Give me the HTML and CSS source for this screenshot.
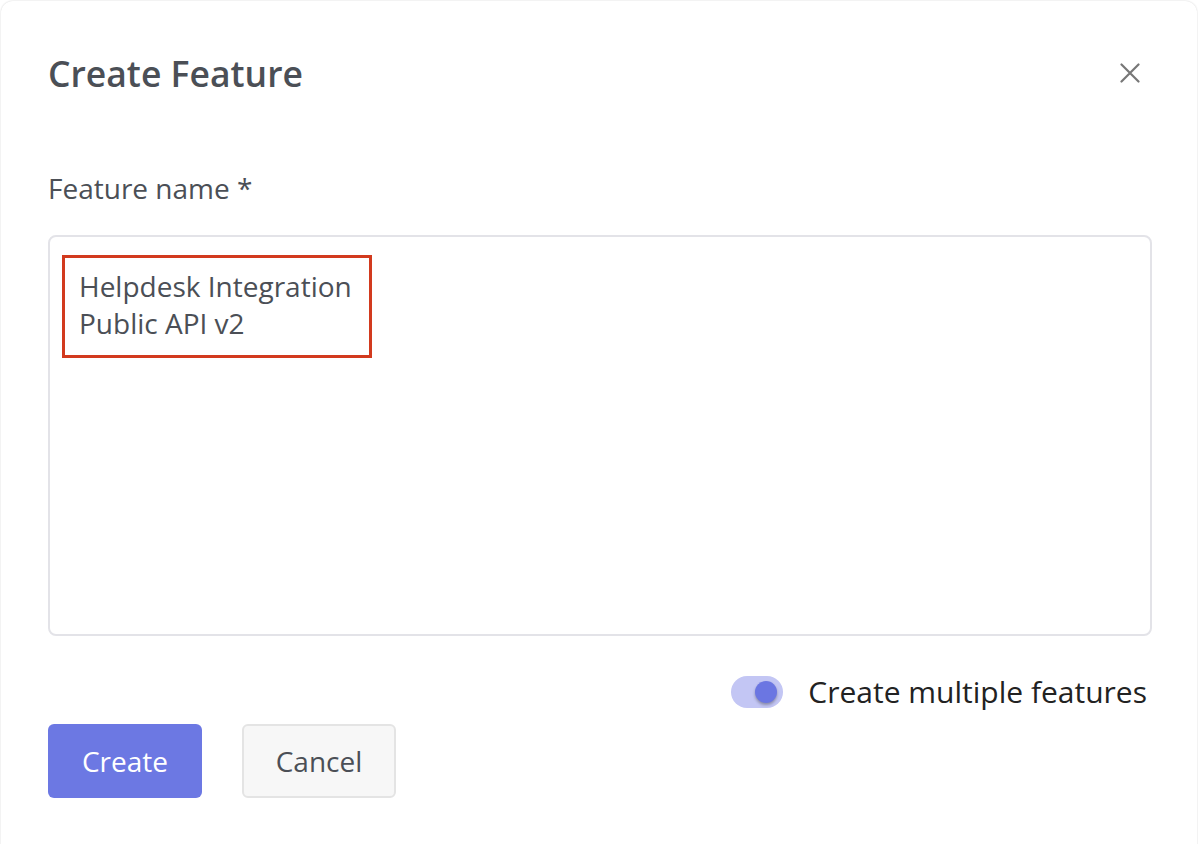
FILE: index.html
```html
<!DOCTYPE html>
<html lang="en">
<head>
<meta charset="utf-8">
<title>Create Feature</title>
<link rel="stylesheet" href="styles.css">
</head>
<body>
<div class="modal">
  <div class="modal-header">
    <h1 class="modal-title">Create Feature</h1>
    <button class="close-btn" aria-label="Close">
      <svg width="20" height="20" viewBox="0 0 20 20"><path d="M1.5 1.5 L18.5 18.5 M18.5 1.5 L1.5 18.5" stroke="#777" stroke-width="2.2" stroke-linecap="round"/></svg>
    </button>
  </div>
  <label class="field-label">Feature name *</label>
  <div class="textarea">
    <div class="highlight">Helpdesk Integration<br>Public API v2</div>
  </div>
  <div class="toggle-row">
    <span class="toggle"><span class="thumb"></span></span>
    <span class="toggle-label">Create multiple features</span>
  </div>
  <div class="actions">
    <button class="btn btn-primary">Create</button>
    <button class="btn btn-secondary">Cancel</button>
  </div>
</div>
</body>
</html>
```
FILE: styles.css
```css
* { box-sizing: border-box; }
html, body { margin: 0; padding: 0; background: #ffffff; }
body {
  font-family: "Open Sans", "Noto Sans", sans-serif;
  width: 1198px;
  height: 844px;
  overflow: hidden;
  padding: 1px 1px 0 1px;
}
.modal {
  width: 1196px;
  height: 860px;
  border-radius: 12px;
  box-shadow: 0 0 2px rgba(0,0,0,0.18);
  padding: 0 46px 0 47px;
  background: #fff;
}
.modal-header {
  display: flex;
  align-items: center;
  justify-content: space-between;
  height: 145px;
}
.modal-title {
  margin: 0;
  font-size: 35.5px;
  font-weight: 600;
  color: #4b4f56;
  margin-top: -1px;
}
.close-btn {
  border: none;
  background: none;
  padding: 0;
  width: 20px;
  height: 20px;
  margin-right: 11px;
  margin-top: -1px;
  display: flex;
}
.field-label {
  display: block;
  font-size: 28px;
  color: #4b4f56;
  line-height: 36px;
  margin-top: 24px;
}
.textarea {
  margin-top: 29px;
  width: 1104px;
  height: 401px;
  border: 2px solid #e3e3e8;
  border-radius: 8px;
  padding: 18px 0 0 12px;
}
.highlight {
  display: inline-block;
  border: 3px solid #d23a1e;
  padding: 10px 17px 13px 14px;
  font-size: 28px;
  line-height: 37px;
  color: #4b4f56;
}
.toggle-row {
  display: flex;
  justify-content: flex-end;
  align-items: center;
  gap: 25px;
  margin-top: 35px;
  width: 1099px;
}
.toggle {
  position: relative;
  width: 52px;
  height: 32px;
  border-radius: 16px;
  background: #c3c6f4;
}
.thumb {
  position: absolute;
  top: 5px;
  right: 6px;
  width: 22px;
  height: 22px;
  border-radius: 50%;
  background: #6b76e2;
  box-shadow: 0 2px 3px rgba(0,0,0,0.3);
}
.toggle-label {
  font-size: 30px;
  color: #222;
}
.actions {
  display: flex;
  gap: 40px;
  margin-top: 12px;
}
.btn {
  font-family: "Open Sans", "Noto Sans", sans-serif;
  font-size: 28px;
  width: 154px;
  height: 74px;
  border-radius: 6px;
  cursor: pointer;
  padding: 0;
}
.btn-primary {
  background: #6c78e3;
  color: #fff;
  border: none;
}
.btn-secondary {
  background: #f7f7f7;
  color: #4b4f56;
  border: 2px solid #e4e4e4;
}
```
